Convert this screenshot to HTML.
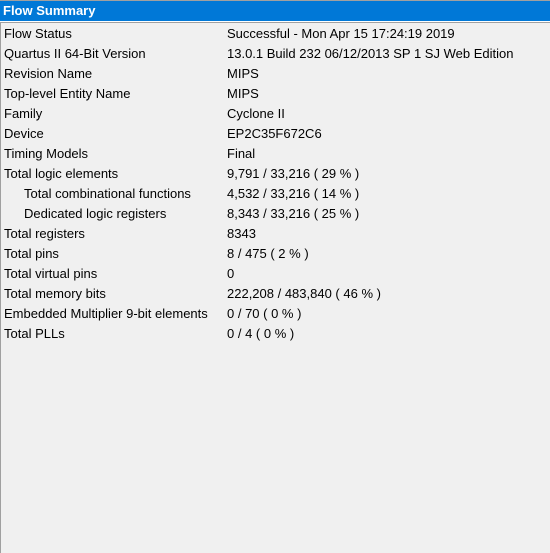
<!DOCTYPE html>
<html><head><meta charset="utf-8"><style>
html,body{margin:0;padding:0;width:550px;height:553px;overflow:hidden;background:#f0f0f0;font-family:"Liberation Sans",sans-serif;}
.top{position:absolute;left:0;top:0;width:550px;height:1px;background:#a0a0a0}
.hdr{position:absolute;left:0;top:1px;width:550px;height:20px;background:#0078d7;color:#fff;font-weight:bold;font-size:13px;line-height:20px;}
.hdr span{position:absolute;left:3px;top:0}
.w{position:absolute;left:0;top:21px;width:550px;height:1px;background:#fff}
.g{position:absolute;left:0;top:22px;width:550px;height:1px;background:#a0a0a0}
.lb{position:absolute;left:0;top:22px;width:1px;height:531px;background:#a0a0a0}
.r{position:absolute;font-size:13px;color:#000;white-space:nowrap;line-height:20px}
</style></head><body>
<div class="top"></div>
<div class="hdr"><span>Flow Summary</span></div>
<div class="w"></div><div class="g"></div><div class="lb"></div>
<div class="r" style="left:4px;top:24px">Flow Status</div><div class="r" style="left:227px;top:24px">Successful - Mon Apr 15 17:24:19 2019</div>
<div class="r" style="left:4px;top:44px">Quartus II 64-Bit Version</div><div class="r" style="left:227px;top:44px">13.0.1 Build 232 06/12/2013 SP 1 SJ Web Edition</div>
<div class="r" style="left:4px;top:64px">Revision Name</div><div class="r" style="left:227px;top:64px">MIPS</div>
<div class="r" style="left:4px;top:84px">Top-level Entity Name</div><div class="r" style="left:227px;top:84px">MIPS</div>
<div class="r" style="left:4px;top:104px">Family</div><div class="r" style="left:227px;top:104px">Cyclone II</div>
<div class="r" style="left:4px;top:124px">Device</div><div class="r" style="left:227px;top:124px">EP2C35F672C6</div>
<div class="r" style="left:4px;top:144px">Timing Models</div><div class="r" style="left:227px;top:144px">Final</div>
<div class="r" style="left:4px;top:164px">Total logic elements</div><div class="r" style="left:227px;top:164px">9,791 / 33,216 ( 29 % )</div>
<div class="r" style="left:24px;top:184px">Total combinational functions</div><div class="r" style="left:227px;top:184px">4,532 / 33,216 ( 14 % )</div>
<div class="r" style="left:24px;top:204px">Dedicated logic registers</div><div class="r" style="left:227px;top:204px">8,343 / 33,216 ( 25 % )</div>
<div class="r" style="left:4px;top:224px">Total registers</div><div class="r" style="left:227px;top:224px">8343</div>
<div class="r" style="left:4px;top:244px">Total pins</div><div class="r" style="left:227px;top:244px">8 / 475 ( 2 % )</div>
<div class="r" style="left:4px;top:264px">Total virtual pins</div><div class="r" style="left:227px;top:264px">0</div>
<div class="r" style="left:4px;top:284px">Total memory bits</div><div class="r" style="left:227px;top:284px">222,208 / 483,840 ( 46 % )</div>
<div class="r" style="left:4px;top:304px">Embedded Multiplier 9-bit elements</div><div class="r" style="left:227px;top:304px">0 / 70 ( 0 % )</div>
<div class="r" style="left:4px;top:324px">Total PLLs</div><div class="r" style="left:227px;top:324px">0 / 4 ( 0 % )</div>
</body></html>
